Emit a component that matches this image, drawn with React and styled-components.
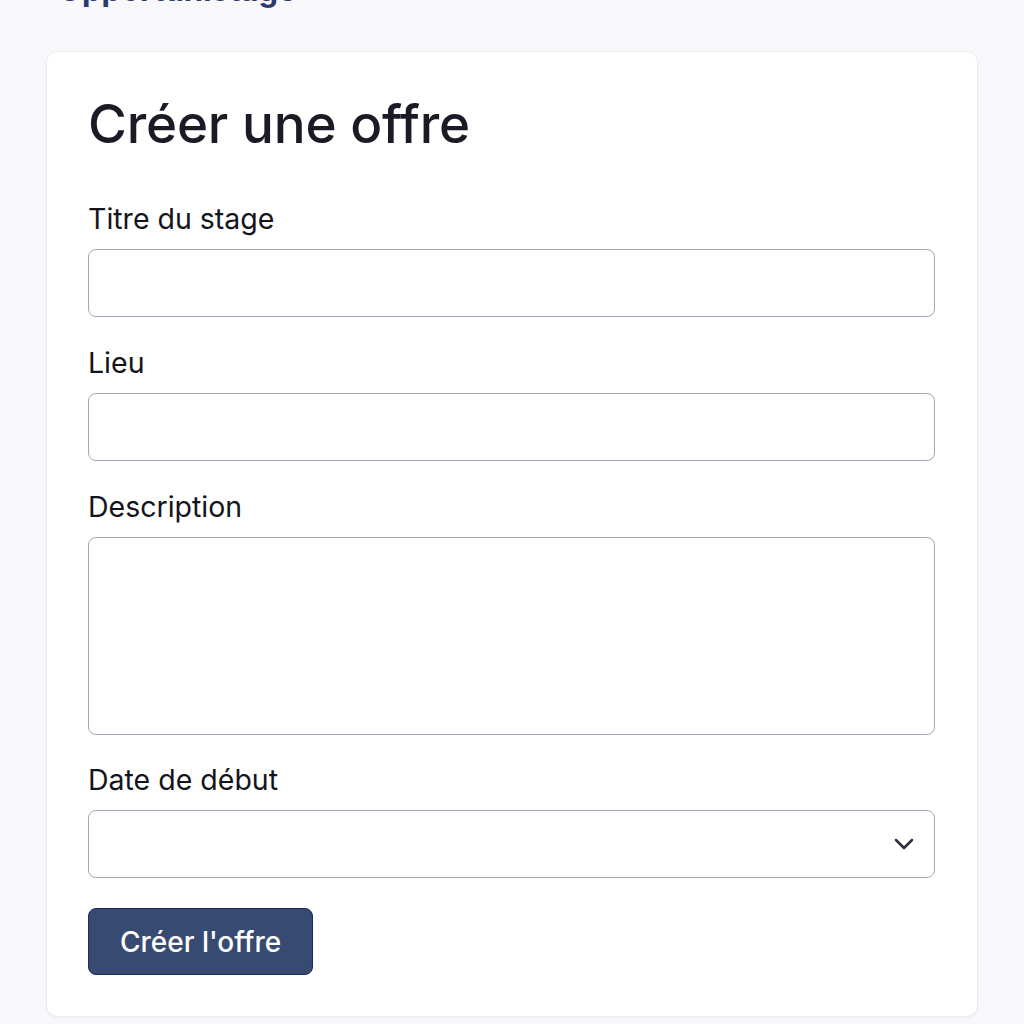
import React from "react";
import styled, { createGlobalStyle } from "styled-components";
import { ChevronDown } from "lucide-react";

const GlobalStyle = createGlobalStyle`
  * { box-sizing: border-box; }
  html, body {
    margin: 0;
    padding: 0;
    background: #f8f8fb;
    font-family: Inter, "Noto Sans", "Liberation Sans", sans-serif;
  }
`;

const Page = styled.div`
  min-height: 1024px;
  padding: 0 47px 8px 47px;
  overflow: hidden;
`;

// page header, scrolled mostly out of view
const Brand = styled.div`
  margin: -30px 0 0 11px;
  height: 82px;
  font-size: 31px;
  font-weight: 700;
  color: #2a3a6b;
  line-height: 40px;
`;

const Card = styled.form`
  width: 930px;
  background: #ffffff;
  border-radius: 10px;
  box-shadow: 0 1px 4px rgba(30, 40, 80, 0.06), 0 0 0 1px rgba(30, 40, 80, 0.03);
  padding: 42px 42px 41px 41px;
  display: flex;
  flex-direction: column;
`;

const Title = styled.h1`
  margin: 0 0 49px 0;
  font-size: 53px;
  line-height: 60px;
  font-weight: 500;
  color: #1a1b26;
  letter-spacing: -0.2px;
`;

const Field = styled.div`
  display: flex;
  flex-direction: column;
  gap: 14px;
  margin-bottom: ${(p) => p.$gap || 30}px;
`;

const Label = styled.label`
  font-size: 28.5px;
  line-height: 32px;
  color: #14151c;
  font-weight: 400;
`;

const Input = styled.input`
  width: 100%;
  height: 68px;
  border: 1px solid #a3a7ba;
  border-radius: 8px;
  background: #fff;
  font: inherit;
  font-size: 24px;
  padding: 0 18px;
  outline: none;
`;

const TextArea = styled.textarea`
  width: 100%;
  height: 198px;
  border: 1px solid #a3a7ba;
  border-radius: 8px;
  background: #fff;
  font: inherit;
  font-size: 24px;
  padding: 14px 18px;
  resize: none;
  outline: none;
  display: block;
`;

const SelectBox = styled.div`
  height: 68px;
  border: 1px solid #a3a7ba;
  border-radius: 8px;
  background: #fff;
  display: flex;
  align-items: center;
  justify-content: flex-end;
  padding-right: 14px;
  color: #2e3039;
`;

const Button = styled.button`
  align-self: flex-start;
  height: 67px;
  padding: 0 31px;
  background: #364a72;
  border: 1px solid #1f2c52;
  border-radius: 8px;
  color: #ffffff;
  font-family: inherit;
  font-size: 28px;
  font-weight: 500;
  cursor: pointer;
`;

export default function App() {
  return (
    <>
      <GlobalStyle />
      <Page>
        <Brand>Opportunistage</Brand>
        <Card onSubmit={(e) => e.preventDefault()}>
          <Title>Créer une offre</Title>
          <Field>
            <Label>Titre du stage</Label>
            <Input type="text" />
          </Field>
          <Field>
            <Label>Lieu</Label>
            <Input type="text" />
          </Field>
          <Field $gap={29}>
            <Label>Description</Label>
            <TextArea />
          </Field>
          <Field>
            <Label>Date de début</Label>
            <SelectBox>
              <ChevronDown size={32} strokeWidth={1.9} />
            </SelectBox>
          </Field>
          <Button type="submit">Créer l'offre</Button>
        </Card>
      </Page>
    </>
  );
}
